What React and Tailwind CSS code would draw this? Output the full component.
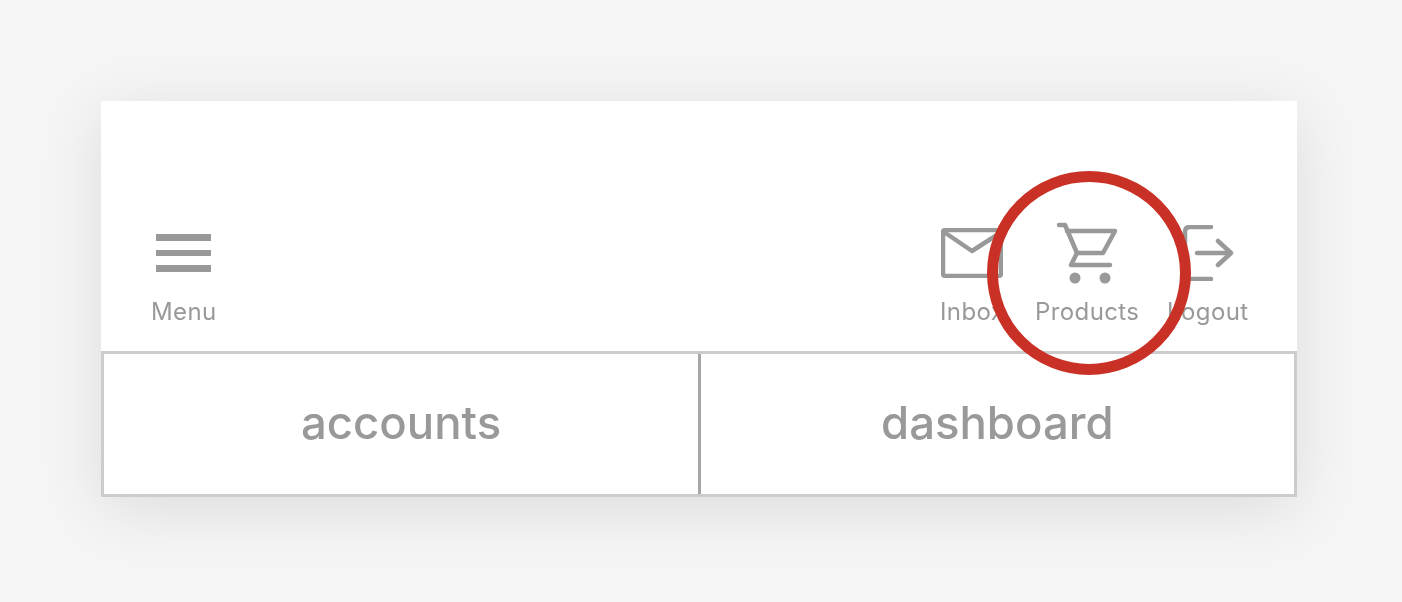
const NavItem = ({ label, className, children }) => {
    return (
        <div className={`flex flex-col items-center ${className}`}>
            <div className="flex h-[64px] items-center justify-center">{children}</div>
            <span className="mt-[12px] text-2xl leading-[29px] tracking-[0.4px] text-[#999999] will-change-transform">{label}</span>
        </div>
    );
};

const App = () => {
    return (
        <div className="h-[602px] w-[1402px] overflow-hidden bg-[#f5f5f5] pl-[101px] pt-[101px] font-['Inter',sans-serif]">
            <div className="relative h-[396px] w-[1196px] bg-white shadow-[0_12px_60px_rgba(0,0,0,0.1)]">
                <div className="flex h-[250px] items-start pt-[120px] pl-[50px] pr-[48px]">
                    <NavItem label="Menu" className="w-[65px]">
                        <div className="flex w-[55px] flex-col gap-[9px]">
                            <div className="h-[6.5px] bg-[#999999]"></div>
                            <div className="h-[6.5px] bg-[#999999]"></div>
                            <div className="h-[6.5px] bg-[#999999]"></div>
                        </div>
                    </NavItem>

                    <NavItem label="Inbox" className="ml-auto">
                        <svg width="62" height="50" viewBox="0 0 62 50" fill="none" stroke="#999999" strokeWidth="4.5" strokeLinejoin="round" strokeLinecap="round">
                            <rect x="2" y="2" width="58" height="46" rx="2" />
                            <path d="M3 4 L31 23 L59 5" />
                        </svg>
                    </NavItem>

                    <NavItem label="Products" className="ml-[31px]">
                        <svg width="62" height="62" viewBox="0 0 62 62" fill="none" stroke="#999999" strokeWidth="4.5" strokeLinejoin="round" strokeLinecap="round">
                            <path d="M3 3 H9 L21 31" />
                            <path d="M11 9 H59 L47 31 H21 L15 43 H54" />
                            <circle cx="19" cy="56" r="5.5" fill="#999999" stroke="none" />
                            <circle cx="49" cy="56" r="5.5" fill="#999999" stroke="none" />
                        </svg>
                    </NavItem>

                    <NavItem label="Logout" className="ml-[28px]">
                        <svg width="52" height="56" viewBox="0 0 52 56" fill="none" stroke="#999999" strokeWidth="4.5" strokeLinejoin="round" strokeLinecap="round">
                            <path d="M29 2 H8 Q3 2 3 7 V49 Q3 54 8 54 H29" />
                            <path d="M15 28 H47" />
                            <path d="M36 16 L49 28 L36 40" />
                        </svg>
                    </NavItem>
                </div>

                <div className="flex h-[146px] border-[3px] border-[#cccccc]">
                    <div className="flex flex-1 items-center justify-center pb-[2px] text-[#999999]">
                        <span className="text-[45.5px] font-medium will-change-transform">accounts</span>
                    </div>
                    <div className="w-[3px] bg-[#a6a6a6]"></div>
                    <div className="flex flex-1 items-center justify-center pb-[2px] text-[#999999]">
                        <span className="text-[45.5px] font-medium will-change-transform">dashboard</span>
                    </div>
                </div>

                <div className="absolute left-[886px] top-[70px] h-[204px] w-[204px] rounded-full border-[11px] border-[#c93126]"></div>
            </div>
        </div>
    );
};

export default App;
